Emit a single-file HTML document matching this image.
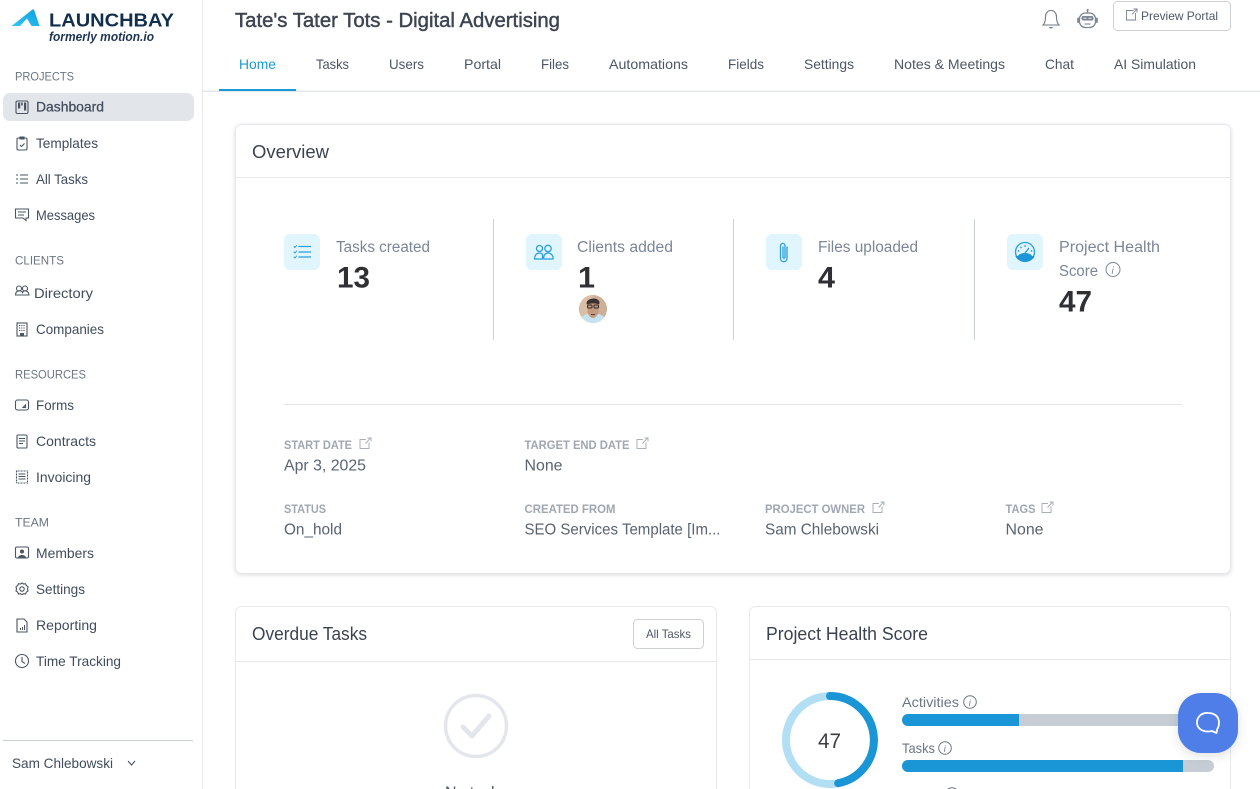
<!DOCTYPE html>
<html lang="en"><head><meta charset="utf-8"><title>Tate's Tater Tots - Digital Advertising</title>
<style>
html,body{margin:0;padding:0;background:#fff;width:1260px;height:789px;overflow:hidden}
svg{display:block}
text{font-family:"Liberation Sans",sans-serif;font-kerning:normal}
.n{font-size:14px;fill:#414c5c}
.h{font-size:12px;fill:#6c7685}
.t{font-size:14px;fill:#4c5665}
.st{font-size:15.5px;fill:#7c8696}
.big{font-size:30px;font-weight:bold;fill:#2e3033}
.l{font-size:12px;font-weight:bold;fill:#a0a7b2}
.v{font-size:15.5px;fill:#5a6372}
.ch{font-size:18px;fill:#3c4350}
.i{fill:none;stroke:#4a5463;stroke-width:1.1}
.b{fill:none;stroke:#2a9fdc;stroke-width:1.3;stroke-linecap:round;stroke-linejoin:round}
.x{fill:none;stroke:#a9b0ba;stroke-width:1}
</style></head><body>
<svg width="1260" height="789" viewBox="0 0 1260 789" xmlns="http://www.w3.org/2000/svg">
<defs><linearGradient id="lg" x1="0" y1="1" x2="1" y2="0"><stop offset="0" stop-color="#32c8f4"/><stop offset="1" stop-color="#0f9ee0"/></linearGradient></defs>
<rect width="1260" height="789" fill="#fff"/>

<!-- sidebar -->
<rect x="202" y="0" width="1" height="789" fill="#e6e8ec"/>
<path d="M11.500 26 L32.500 9.500 L34 9.500 L39.500 26 L31.500 26 L27 18.500 L20 26Z" fill="url(#lg)"/>
<text x="49" y="26.500" textLength="125" lengthAdjust="spacingAndGlyphs" font-size="18" font-weight="bold" fill="#12304e">LAUNCHBAY</text>
<text x="49" y="41" textLength="105" lengthAdjust="spacingAndGlyphs" font-size="12.5" font-weight="bold" font-style="italic" fill="#1f3554">formerly motion.io</text>

<text class="h" x="15" y="80.500" textLength="59" lengthAdjust="spacingAndGlyphs">PROJECTS</text>
<rect x="3" y="93" width="191" height="28" rx="7" fill="#e2e5ea"/>
<text class="n" x="36" y="111.500" textLength="68" lengthAdjust="spacingAndGlyphs" stroke="#414c5c" stroke-width=".25">Dashboard</text>
<text class="n" x="36" y="148" textLength="62" lengthAdjust="spacingAndGlyphs">Templates</text>
<text class="n" x="36" y="184" textLength="52" lengthAdjust="spacingAndGlyphs">All Tasks</text>
<text class="n" x="36" y="220" textLength="59" lengthAdjust="spacingAndGlyphs">Messages</text>
<text class="h" x="15" y="264.500" textLength="49" lengthAdjust="spacingAndGlyphs">CLIENTS</text>
<text class="n" x="34" y="298" textLength="59" lengthAdjust="spacingAndGlyphs">Directory</text>
<text class="n" x="36" y="334" textLength="68" lengthAdjust="spacingAndGlyphs">Companies</text>
<text class="h" x="15" y="378.500" textLength="71" lengthAdjust="spacingAndGlyphs">RESOURCES</text>
<text class="n" x="36" y="410" textLength="38" lengthAdjust="spacingAndGlyphs">Forms</text>
<text class="n" x="36" y="446" textLength="60" lengthAdjust="spacingAndGlyphs">Contracts</text>
<text class="n" x="36" y="482" textLength="55" lengthAdjust="spacingAndGlyphs">Invoicing</text>
<text class="h" x="15" y="526.500" textLength="34" lengthAdjust="spacingAndGlyphs">TEAM</text>
<text class="n" x="36" y="558" textLength="58" lengthAdjust="spacingAndGlyphs">Members</text>
<text class="n" x="36" y="594" textLength="49" lengthAdjust="spacingAndGlyphs">Settings</text>
<text class="n" x="36" y="630" textLength="61" lengthAdjust="spacingAndGlyphs">Reporting</text>
<text class="n" x="36" y="666" textLength="85" lengthAdjust="spacingAndGlyphs">Time Tracking</text>
<rect x="3" y="740" width="190" height="1" fill="#c9d0d9"/>
<text class="n" x="12" y="768" textLength="101" lengthAdjust="spacingAndGlyphs">Sam Chlebowski</text>
<path d="M128 761 L131.500 765 L135 761" class="i"/>

<!-- sidebar icons -->
<rect x="16" y="101" width="12" height="12.500" rx="1.500" class="i" stroke-width="1.300"/>
<path d="M18 102.500h2.200v6h-2.200zM21.200 102.500h1.600v3h-1.600zM24 102.500h2.200v8h-2.200z" fill="#4a5463"/>
<g class="i"><rect x="17" y="138" width="10" height="12" rx="1.200"/><path d="M20 137h4v2h-4zM20 145l1.500 1.500 3-3"/></g>
<g class="i"><path d="M20 175h8M20 179h8M20 183h8"/><path d="M16 175h2M16 179h2M16 183h2"/></g>
<path d="M15.500 209h13v9h-2.500v2.500l-3-2.500h-7.500zM18 212h8M18 215h6" class="i"/>
<g class="i"><circle cx="19" cy="288.500" r="2.500"/><circle cx="25" cy="288.500" r="2.500"/><path d="M15.500 295c0-5 6-5 7-2.500 1-2.500 6-2.500 6.500 2.500z"/></g>
<g class="i"><rect x="17" y="323" width="10" height="13"/><path d="M19 325.500h6M19 328h6M19 330.500h6" stroke-dasharray="1.200 1"/></g><rect x="20" y="333" width="4" height="3" fill="#4a5463"/>
<g class="i"><rect x="15.500" y="400" width="13" height="10" rx="2"/><path d="M23 407.500l2.500-2.500v2.500z"/></g>
<g class="i"><rect x="17" y="435" width="10" height="13" rx="1"/><path d="M19 438.500h6M19 441h6M19 443.500h4"/></g>
<g class="i"><rect x="16.500" y="471" width="11" height="12" stroke-dasharray="1 .5"/><path d="M18.500 474h7M18.500 476.500h7M18.500 479h7"/></g>
<g class="i"><rect x="15.500" y="547" width="13" height="11" rx="1.500"/></g><circle cx="22" cy="551.500" r="2" fill="#4a5463"/><path d="M18 558c0-4 8-4 8 0z" fill="#4a5463"/>
<g class="i" stroke-width=".9"><circle cx="22" cy="589" r="2.200"/><path d="M22 583l1.500 1 2-.3 .8 1.800 1.700 1.200-.5 2.300.5 2-1.700 1.200-.8 1.800-2 -.3-1.500 1-1.500-1-2 .3-.8-1.800-1.700-1.200.5-2-.5-2.300 1.700-1.200.8-1.800 2 .3z"/></g>
<g class="i"><path d="M17 619h7l3 3v10H17z"/></g><path d="M20 630v-2h1v2zM22 630v-3h1v3zM24 630v-5h1v5z" fill="#4a5463"/>
<g class="i"><circle cx="22" cy="661" r="6.500"/><path d="M22 657v4.500l3 2"/></g>

<!-- header -->
<text x="235" y="27" textLength="325" lengthAdjust="spacingAndGlyphs" font-size="20" fill="#3e4552" stroke="#3e4552" stroke-width=".45">Tate's Tater Tots - Digital Advertising</text>
<g fill="none" stroke="#6f7a88" stroke-width="1.100"><path d="M1043 25c2-2 2.500-4 2.500-8 0-3.500 2-6.500 5.500-6.500s5.500 3 5.500 6.500c0 4 .5 6 2.500 8z"/></g><path d="M1048.500 27h5l-2.500 1.800z" fill="#6f7a88"/>
<g><rect x="1087" y="10" width="1.200" height="3" fill="#7b8593"/><circle cx="1087.600" cy="10" r="1.100" fill="#7b8593"/><rect x="1079.500" y="13" width="16" height="14.500" rx="6" fill="#fff" stroke="#7b8593" stroke-width="1.300"/><rect x="1077.200" y="17.500" width="1.800" height="5.500" rx=".9" fill="#7b8593"/><rect x="1096" y="17.500" width="1.800" height="5.500" rx=".9" fill="#7b8593"/><rect x="1081.500" y="16" width="12" height="4.500" rx="2" fill="#7b8593"/><path d="M1083.500 18.200h3M1088.500 18.200h3" stroke="#fff" stroke-width=".9"/><path d="M1084.500 24h6" stroke="#7b8593" stroke-width="1.100"/></g>
<rect x="1113.500" y="1.500" width="117" height="29" rx="4" fill="#fff" stroke="#cdd1d7"/>
<path d="M1135.500 13v7h-9v-9.500h7M1132 14.500l5-5.500M1133.500 9h3.500v3.500" fill="none" stroke="#7a8391" stroke-width=".9"/>
<text x="1141" y="20" textLength="77" lengthAdjust="spacingAndGlyphs" font-size="12" fill="#4f5866">Preview Portal</text>

<rect x="203" y="90.500" width="1057" height="1.500" fill="#e3e6ea"/>
<text x="239" y="69" textLength="37" lengthAdjust="spacingAndGlyphs" font-size="14" fill="#1a9ad6">Home</text>
<rect x="219" y="89" width="77" height="2" fill="#1a9ad6"/>
<text class="t" x="316" y="69" textLength="33" lengthAdjust="spacingAndGlyphs">Tasks</text>
<text class="t" x="389" y="69" textLength="35" lengthAdjust="spacingAndGlyphs">Users</text>
<text class="t" x="464" y="69" textLength="37" lengthAdjust="spacingAndGlyphs">Portal</text>
<text class="t" x="541" y="69" textLength="28" lengthAdjust="spacingAndGlyphs">Files</text>
<text class="t" x="609" y="69" textLength="79" lengthAdjust="spacingAndGlyphs">Automations</text>
<text class="t" x="728" y="69" textLength="36" lengthAdjust="spacingAndGlyphs">Fields</text>
<text class="t" x="804" y="69" textLength="50" lengthAdjust="spacingAndGlyphs">Settings</text>
<text class="t" x="894" y="69" textLength="111" lengthAdjust="spacingAndGlyphs">Notes &amp; Meetings</text>
<text class="t" x="1045" y="69" textLength="29" lengthAdjust="spacingAndGlyphs">Chat</text>
<text class="t" x="1114" y="69" textLength="82" lengthAdjust="spacingAndGlyphs">AI Simulation</text>

<!-- overview card -->
<rect x="235.500" y="124.500" width="995" height="449" rx="6" fill="#fff" stroke="#e6e8ec" style="filter:drop-shadow(0 1px 2px rgba(30,40,60,.16))"/>
<rect x="236" y="177" width="994" height="1" fill="#e6e8ec"/>
<text class="ch" x="252" y="158" textLength="77" lengthAdjust="spacingAndGlyphs">Overview</text>

<rect x="493" y="219" width="1" height="121" fill="#cdd3dc"/>
<rect x="733" y="219" width="1" height="121" fill="#cdd3dc"/>
<rect x="974" y="219" width="1" height="121" fill="#c8d0de"/>

<rect x="284" y="234" width="36" height="36" rx="6" fill="#e1f5fe"/>
<rect x="526" y="234" width="36" height="36" rx="6" fill="#e1f5fe"/>
<rect x="766" y="234" width="36" height="36" rx="6" fill="#e1f5fe"/>
<rect x="1007" y="234" width="36" height="36" rx="6" fill="#e1f5fe"/>
<g class="b"><path d="M299 246.500h11.500M299 252h11.500M299 257h11.500"/><path d="M294 246.500l1 1 1.500-2M294 252l1 1 1.500-2M294 257l1 1 1.500-2" stroke-width="1"/></g>
<g class="b"><circle cx="539.500" cy="248.500" r="3"/><circle cx="548" cy="248.500" r="3.200"/><path d="M534.500 259c0-3 1.500-6 5-6 1.500 0 2.300.5 3 1.200v4.800zM544 259c-1-3 1-6 4-6s5.500 2.500 5 6z"/></g>
<path d="M787 247v11c0 5-6.500 5-6.500 0v-12c0-3.500 4.500-3.500 4.500 0v11c0 1.500-2 1.500-2 0v-10" class="b"/>
<g><circle cx="1025" cy="252" r="9.500" fill="none" stroke="#2a9fdc" stroke-width="1.300"/><path d="M1015.500 256h19c-1 3.500-4.500 5.500-9.500 5.500s-8.500-2-9.500-5.500z" fill="#1d95d6"/><path d="M1018 256c1-2 4-3 7-3s6 1 7 3z" fill="#1d95d6"/><path d="M1025 253l4-5" stroke="#1d95d6" stroke-width="1.300"/><g fill="#2a9fdc"><circle cx="1018.500" cy="251" r=".9"/><circle cx="1021" cy="247.500" r=".9"/><circle cx="1025" cy="246" r=".9"/><circle cx="1031.500" cy="251" r=".9"/></g></g>

<text class="st" x="336" y="252" textLength="94" lengthAdjust="spacingAndGlyphs">Tasks created</text>
<text class="big" x="337" y="287.500" textLength="33" lengthAdjust="spacingAndGlyphs">13</text>
<text class="st" x="577" y="252" textLength="96" lengthAdjust="spacingAndGlyphs">Clients added</text>
<text class="big" x="578" y="287.500" textLength="17" lengthAdjust="spacingAndGlyphs">1</text>
<text class="st" x="818" y="252" textLength="100" lengthAdjust="spacingAndGlyphs">Files uploaded</text>
<text class="big" x="818" y="287.500" textLength="17" lengthAdjust="spacingAndGlyphs">4</text>
<text class="st" x="1059" y="252" textLength="101" lengthAdjust="spacingAndGlyphs">Project Health</text>
<text class="st" x="1059" y="276" textLength="39" lengthAdjust="spacingAndGlyphs">Score</text>
<circle cx="1113" cy="269.500" r="7" fill="none" stroke="#7c8696" stroke-width="1"/><text x="1111.500" y="274" font-size="10" font-style="italic" fill="#7c8696">i</text>
<text class="big" x="1059" y="311.500" textLength="33" lengthAdjust="spacingAndGlyphs">47</text>

<!-- avatar -->
<g><circle cx="593" cy="309" r="14" fill="#cdb097"/><path d="M580 305c2-7 7-10 13-10v28c-6 0-11-4-13-10z" fill="#d9bfa6"/><path d="M581.500 317c3 4 7 6 11.500 6s8.500-2 11.500-6l-5-3h-13z" fill="#c3e3f0"/><path d="M587.500 303c0-5 11-5 11 0v9c-1 4-3.500 6-5.500 6s-4.500-2-5.500-6z" fill="#c69a7e"/><path d="M586.500 303.500c0-6 13-7 13-.5l-.5 1.500c-3-1.500-8-1.500-12 0z" fill="#3a3230"/><g fill="none" stroke="#2f2a28" stroke-width="1"><rect x="587.500" y="305" width="4.500" height="3" rx="1"/><rect x="594" y="305" width="4.500" height="3" rx="1"/></g><path d="M591 314.500h4" stroke="#5a4234" stroke-width="1"/></g>

<rect x="284" y="404" width="898" height="1" fill="#e2e5e9"/>

<text class="l" x="284" y="449" textLength="68" lengthAdjust="spacingAndGlyphs">START DATE</text>
<path d="M369 442.500v6h-9v-9h6M365.500 443.500l5-5.500M367.500 438h3.500v3.500" class="x"/>
<text class="v" x="284" y="470.500" textLength="82" lengthAdjust="spacingAndGlyphs">Apr 3, 2025</text>
<text class="l" x="524.500" y="449" textLength="105" lengthAdjust="spacingAndGlyphs">TARGET END DATE</text>
<path d="M646 442.500v6h-9v-9h6M642.500 443.500l5-5.500M644.500 438h3.500v3.500" class="x"/>
<text class="v" x="524.500" y="470.500" textLength="38" lengthAdjust="spacingAndGlyphs">None</text>
<text class="l" x="284" y="513" textLength="42" lengthAdjust="spacingAndGlyphs">STATUS</text>
<text class="v" x="284" y="534.500" textLength="58" lengthAdjust="spacingAndGlyphs">On_hold</text>
<text class="l" x="524.500" y="513" textLength="91" lengthAdjust="spacingAndGlyphs">CREATED FROM</text>
<text class="v" x="524.500" y="534.500" textLength="196" lengthAdjust="spacingAndGlyphs">SEO Services Template [Im...</text>
<text class="l" x="765" y="513" textLength="100" lengthAdjust="spacingAndGlyphs">PROJECT OWNER</text>
<path d="M882 506.500v6h-9v-9h6M878.500 507.500l5-5.500M880.500 502h3.500v3.500" class="x"/>
<text class="v" x="765" y="534.500" textLength="114" lengthAdjust="spacingAndGlyphs">Sam Chlebowski</text>
<text class="l" x="1005.500" y="513" textLength="30" lengthAdjust="spacingAndGlyphs">TAGS</text>
<path d="M1051 506.500v6h-9v-9h6M1047.500 507.500l5-5.500M1049.500 502h3.500v3.500" class="x"/>
<text class="v" x="1005.500" y="534.500" textLength="38" lengthAdjust="spacingAndGlyphs">None</text>

<!-- overdue card -->
<rect x="235.500" y="606.500" width="481" height="260" rx="6" fill="#fff" stroke="#e6e8ec"/>
<rect x="236" y="661" width="480" height="1" fill="#e6e8ec"/>
<text class="ch" x="252" y="640" textLength="115" lengthAdjust="spacingAndGlyphs">Overdue Tasks</text>
<rect x="633.500" y="619.500" width="70" height="29" rx="4" fill="#fff" stroke="#cdd1d7"/>
<text x="646" y="638" textLength="45" lengthAdjust="spacingAndGlyphs" font-size="12" fill="#4f5866">All Tasks</text>
<circle cx="476" cy="726" r="30.500" fill="none" stroke="#e3e6eb" stroke-width="3.500"/>
<path d="M463 727l9 9 17-20" fill="none" stroke="#e3e6eb" stroke-width="5" stroke-linecap="round" stroke-linejoin="round"/>
<text x="445" y="797.500" textLength="62" lengthAdjust="spacingAndGlyphs" font-size="16" fill="#4c5665">No tasks</text>

<!-- health card -->
<rect x="749.500" y="606.500" width="481" height="260" rx="6" fill="#fff" stroke="#e6e8ec"/>
<rect x="750" y="659" width="480" height="1" fill="#e6e8ec"/>
<text class="ch" x="766" y="640" textLength="162" lengthAdjust="spacingAndGlyphs">Project Health Score</text>
<circle cx="830" cy="740" r="44" fill="none" stroke="#b3dff5" stroke-width="8"/>
<path d="M830 696 A44 44 0 0 1 838.200 783.200" fill="none" stroke="#1a95d5" stroke-width="8" stroke-linecap="round"/>
<text x="818" y="748" textLength="23" lengthAdjust="spacingAndGlyphs" font-size="21" fill="#3a3d42">47</text>
<text x="902" y="707" textLength="57" lengthAdjust="spacingAndGlyphs" font-size="14" fill="#6c7685">Activities</text>
<circle cx="970" cy="702" r="6.300" fill="none" stroke="#6c7685" stroke-width="1"/><text x="968.800" y="706" font-size="9" font-style="italic" fill="#6c7685">i</text>
<rect x="902" y="714" width="312" height="12" rx="6" fill="#c6cdd4"/>
<path d="M908 714H1019V726H908a6 6 0 0 1 0-12z" fill="#1a95d5"/>
<text x="902" y="753" textLength="33" lengthAdjust="spacingAndGlyphs" font-size="14" fill="#6c7685">Tasks</text>
<circle cx="945" cy="748" r="6.300" fill="none" stroke="#6c7685" stroke-width="1"/><text x="943.800" y="752" font-size="9" font-style="italic" fill="#6c7685">i</text>
<rect x="902" y="760" width="312" height="12" rx="6" fill="#c6cdd4"/>
<path d="M908 760H1183V772H908a6 6 0 0 1 0-12z" fill="#1a95d5"/>
<text x="902" y="799" textLength="40" lengthAdjust="spacingAndGlyphs" font-size="14" fill="#6c7685">Clients</text>
<circle cx="952" cy="794" r="6.300" fill="none" stroke="#6c7685" stroke-width="1"/>

<!-- chat -->
<rect x="1178" y="693" width="60" height="60" rx="23" fill="#507ee9" style="filter:drop-shadow(0 3px 5px rgba(30,40,60,.14))"/>
<path d="M1208 713.500c6.500 0 11 3.500 11 9.500 0 3-.7 5-1.700 6.500l-.8 4-4.500-2c-1.300.4-2.500.5-4 .5-6.500 0-11-3.500-11-9s4.500-10 11-9.500z" transform="translate(0 -.5)" fill="none" stroke="#fff" stroke-width="1.800" stroke-linejoin="round"/>
</svg>
</body></html>
